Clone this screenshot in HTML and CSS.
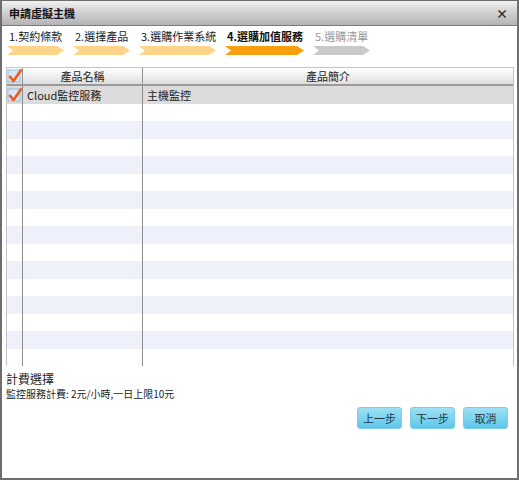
FILE: index.html
```html
<!DOCTYPE html>
<html lang="zh-Hant">
<head>
    <meta charset="UTF-8">
    <title>申請虛擬主機</title>
    <link rel="stylesheet" href="styles.css">
</head>
<body>

    <div class="window">
        <div class="titlebar">
            <span class="title">申請虛擬主機</span>
            <span class="close">×</span>
        </div>

        <!-- 步驟 -->
        <div class="steps">
            <div class="step done w57">
                <span>1.契約條款</span>
                <svg viewBox="0 0 57 9" preserveAspectRatio="none"><polygon points="0,0 50,0 57,4.5 50,9 0,9 6,4.5"/></svg>
            </div>
            <div class="step done w57">
                <span>2.選擇產品</span>
                <svg viewBox="0 0 57 9" preserveAspectRatio="none"><polygon points="0,0 50,0 57,4.5 50,9 0,9 6,4.5"/></svg>
            </div>
            <div class="step done w77">
                <span>3.選購作業系統</span>
                <svg viewBox="0 0 77 9" preserveAspectRatio="none"><polygon points="0,0 70,0 77,4.5 70,9 0,9 6,4.5"/></svg>
            </div>
            <div class="step current w79">
                <span>4.選購加值服務</span>
                <svg viewBox="0 0 79 9" preserveAspectRatio="none"><polygon points="0,0 72,0 79,4.5 72,9 0,9 6,4.5"/></svg>
            </div>
            <div class="step todo w57">
                <span>5.選購清單</span>
                <svg viewBox="0 0 57 9" preserveAspectRatio="none"><polygon points="0,0 50,0 57,4.5 50,9 0,9 6,4.5"/></svg>
            </div>
        </div>

        <!-- 產品清單 -->
        <div class="grid">
            <table>
                <thead>
                    <tr>
                        <th class="chk"><span class="box"><svg viewBox="0 0 16 16"><rect x="1" y="2" width="12" height="12" fill="#d6e6f6" stroke="#9dbbd9"/><path d="M2.5 8 L6.5 13 L14.5 1.5" fill="none" stroke="#ec5a1c" stroke-width="2.6" stroke-linejoin="round"/></svg></span></th>
                        <th class="name">產品名稱</th>
                        <th>產品簡介</th>
                    </tr>
                </thead>
                <tbody>
                    <tr class="selected">
                        <td class="chk"><span class="box"><svg viewBox="0 0 16 16"><rect x="1" y="2" width="12" height="12" fill="#d6e6f6" stroke="#9dbbd9"/><path d="M2.5 8 L6.5 13 L14.5 1.5" fill="none" stroke="#ec5a1c" stroke-width="2.6" stroke-linejoin="round"/></svg></span></td>
                        <td>Cloud監控服務</td>
                        <td>主機監控</td>
                    </tr>
                    <tr><td class="chk"></td><td></td><td></td></tr>
                    <tr><td class="chk"></td><td></td><td></td></tr>
                    <tr><td class="chk"></td><td></td><td></td></tr>
                    <tr><td class="chk"></td><td></td><td></td></tr>
                    <tr><td class="chk"></td><td></td><td></td></tr>
                    <tr><td class="chk"></td><td></td><td></td></tr>
                    <tr><td class="chk"></td><td></td><td></td></tr>
                    <tr><td class="chk"></td><td></td><td></td></tr>
                    <tr><td class="chk"></td><td></td><td></td></tr>
                    <tr><td class="chk"></td><td></td><td></td></tr>
                    <tr><td class="chk"></td><td></td><td></td></tr>
                    <tr><td class="chk"></td><td></td><td></td></tr>
                    <tr><td class="chk"></td><td></td><td></td></tr>
                    <tr><td class="chk"></td><td></td><td></td></tr>
                    <tr><td class="chk"></td><td></td><td></td></tr>
                </tbody>
            </table>
        </div>

        <div class="billing">
            <div class="billing-title">計費選擇</div>
            <div class="billing-text">監控服務計費: 2元/小時,一日上限10元</div>
        </div>

        <div class="actions">
            <button>上一步</button>
            <button>下一步</button>
            <button>取消</button>
        </div>
    </div>

</body>
</html>
```

FILE: styles.css
```css
body {
    margin: 0;
    font-family: "Noto Sans CJK TC", "Liberation Sans", sans-serif;
    color: #222;
    background: #fff;
}
.window {
    width: 519px;
    height: 480px;
    box-sizing: border-box;
    border: 2px solid #6e6e6e;
    border-top-width: 1px;
    background: #fff;
    display: flex;
    flex-direction: column;
}
.titlebar {
    height: 24px;
    display: flex;
    align-items: center;
    justify-content: space-between;
    padding: 0 9px 0 7px;
    background: linear-gradient(#f2f2f2, #d2d2d2 45%, #b4b4b4);
    border-bottom: 1px solid #7a7a7a;
}
.title {
    font-size: 11px;
    font-weight: bold;
    color: #111;
}
.close {
    font-size: 12px;
    font-weight: bold;
    color: #222;
}
.steps {
    display: flex;
    gap: 9px;
    padding: 3px 0 0 5px;
    height: 34px;
    box-sizing: border-box;
}
.step {
    display: flex;
    flex-direction: column;
}
.step span {
    font-size: 11px;
    line-height: 14px;
    padding-left: 2px;
    white-space: nowrap;
    color: #222;
}
.step svg {
    width: 100%;
    height: 9px;
    margin-top: 3px;
    display: block;
}
.w57 { width: 57px; }
.w77 { width: 77px; }
.w79 { width: 79px; }
.done polygon { fill: #fdd48a; }
.current polygon { fill: #f8a00e; }
.current span { font-weight: bold; color: #111; }
.todo polygon { fill: #c9c9c9; }
.todo span { color: #9a9a9a; }
.grid {
    margin: 7px 3px 0 4px;
    height: 299px;
    border: 1px solid #c4c4c4;
    box-sizing: border-box;
}
table {
    width: 100%;
    height: 100%;
    border-collapse: collapse;
    table-layout: fixed;
    font-size: 11px;
}
th {
    height: 16px;
    font-weight: normal;
    color: #222;
    background: linear-gradient(#ffffff, #ececec 60%, #dedede);
    border-bottom: 2px solid #9a9a9a;
    border-left: 1px solid #8e8e8e;
    padding: 0;
}
th.chk, td.chk {
    width: 15px;
    border-left: none;
    padding: 0;
}
th.name {
    width: 119px;
}
td {
    height: 17.5px;
    padding: 0 4px;
    border-left: 1px solid #8e8e8e;
    white-space: nowrap;
}
tbody tr:nth-child(odd) {
    background: #eef1fa;
}
tbody tr:nth-child(even) {
    background: #fff;
}
tbody tr.selected {
    background: #dcdcdc;
}
.box {
    display: block;
    width: 16px;
    height: 16px;
}
.box svg {
    width: 16px;
    height: 16px;
    display: block;
}
.billing {
    padding: 5px 0 0 4px;
}
.billing-title {
    font-size: 12px;
    line-height: 16px;
}
.billing-text {
    font-size: 10px;
    line-height: 14px;
}
.actions {
    display: flex;
    justify-content: flex-end;
    gap: 8px;
    padding: 6px 9px 0 0;
}
.actions button {
    width: 45px;
    height: 22px;
    border: 1px solid #7dcbe6;
    border-radius: 3px;
    background: linear-gradient(#9ee0f4, #5cc6ea);
    font-family: "Noto Sans CJK TC", sans-serif;
    font-size: 11px;
    color: #1d3744;
    padding: 0;
}
```
